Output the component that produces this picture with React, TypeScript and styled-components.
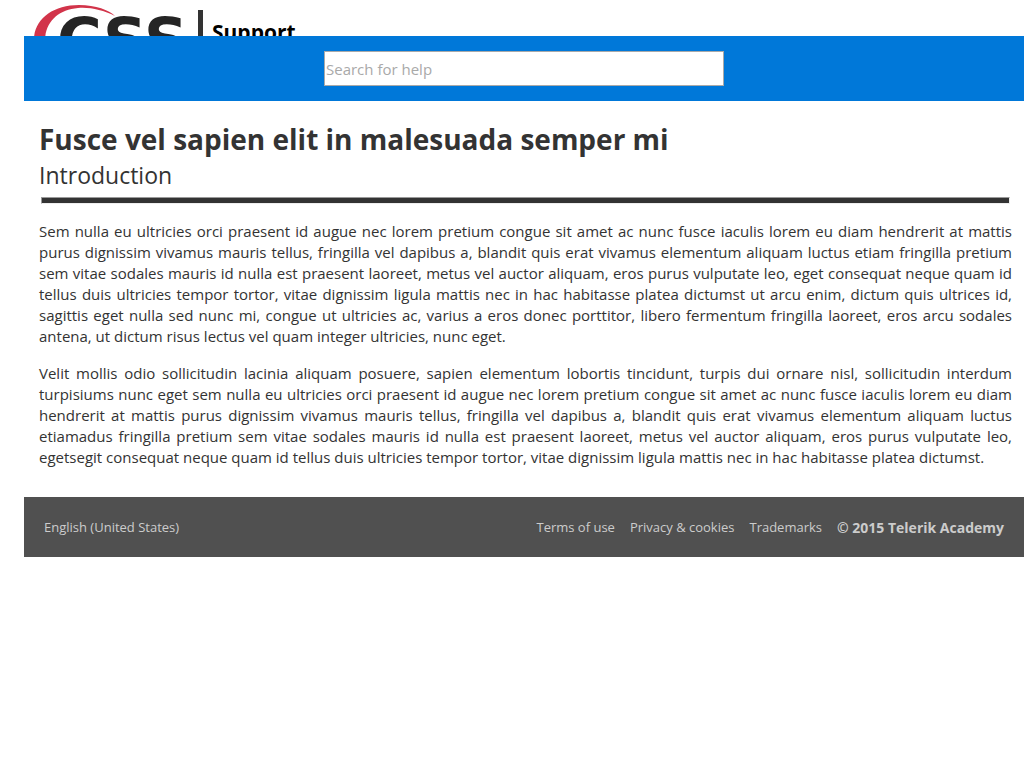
import React from "react";
import styled, { createGlobalStyle } from "styled-components";

const GlobalStyle = createGlobalStyle`
  body {
    margin: 0;
    background: #fff;
    color: #333;
    font: 15px/21px "Open Sans", "Noto Sans", sans-serif;
  }
`;

const Page = styled.div`
  margin-left: 24px;
`;

const Header = styled.header`
  display: flex;
  height: 36px;
  padding-left: 8px;
  overflow: hidden;
`;

const LogoLink = styled.a`
  flex: none;
  height: 64px;
`;

const SiteName = styled.span`
  margin: 10px 0 0 9px;
  padding: 6px 0 0 9px;
  border-left: 5px solid #333;
  color: #000;
  font-size: 21px;
  font-weight: 700;
  line-height: 32px;
`;

const SearchBar = styled.form`
  display: flex;
  justify-content: center;
  padding: 15px;
  background: #0078d9;
`;

const SearchInput = styled.input`
  box-sizing: border-box;
  width: 400px;
  height: 35px;
  padding: 1px;
  border: 1px solid #a9a9a9;
  background: #fff;
  color: #333;
  font: inherit;

  &::placeholder {
    color: #a9a9a9;
    opacity: 1;
  }
`;

const Article = styled.main`
  padding: 18px 12px 29px 15px;
`;

const Title = styled.h1`
  margin: 0;
  font-size: 28px;
  line-height: 40px;
`;

const Subtitle = styled.h2`
  margin: 0;
  font-size: 23px;
  font-weight: 400;
  line-height: 32px;
`;

const Rule = styled.hr`
  height: 5px;
  margin: 6px 2px 17px;
  border: 1px solid;
  border-color: #9a9a9a #eee #eee #9a9a9a;
  background: #333;
`;

const Paragraph = styled.p`
  margin: 0;
  text-align: justify;

  & + & {
    margin-top: 16px;
  }
`;

const Footer = styled.footer`
  display: flex;
  flex-wrap: wrap;
  align-items: center;
  gap: 15px;
  min-height: 60px;
  padding: 0 20px;
  background: #505050;
  color: #ccc;
  font-size: 13px;
`;

const FooterLink = styled.a`
  color: inherit;
  text-decoration: none;
`;

const Language = styled(FooterLink)`
  margin-right: auto;
`;

const Copyright = styled.strong`
  font-size: 14px;
`;

const Logo = () => (
  <svg width="157" height="64" viewBox="0 0 157 64" role="img" aria-label="CSS">
    <path
      d="M2 44C0 21 19 5 47 5C64 5 77 10 83 16C71 10 58 7 46 8C25 10 12 23 13 44Z"
      fill="#d2344a"
    />
    <text
      x="25"
      y="61"
      fill="#252525"
      fontFamily="DejaVu Sans, sans-serif"
      fontSize="61"
      fontWeight="700"
    >
      CSS
    </text>
  </svg>
);

export default function App() {
  return (
    <>
      <GlobalStyle />
      <Page>
        <Header>
          <LogoLink href="#">
            <Logo />
          </LogoLink>
          <SiteName>Support</SiteName>
        </Header>
        <SearchBar role="search">
          <SearchInput type="text" placeholder="Search for help" aria-label="Search for help" />
        </SearchBar>
        <Article>
          <Title>Fusce vel sapien elit in malesuada semper mi</Title>
          <Subtitle>Introduction</Subtitle>
          <Rule />
          <Paragraph>
            Sem nulla eu ultricies orci praesent id augue nec lorem pretium congue sit amet ac nunc
            fusce iaculis lorem eu diam hendrerit at mattis purus dignissim vivamus mauris tellus,
            fringilla vel dapibus a, blandit quis erat vivamus elementum aliquam luctus etiam
            fringilla pretium sem vitae sodales mauris id nulla est praesent laoreet, metus vel
            auctor aliquam, eros purus vulputate leo, eget consequat neque quam id tellus duis
            ultricies tempor tortor, vitae dignissim ligula mattis nec in hac habitasse platea
            dictumst ut arcu enim, dictum quis ultrices id, sagittis eget nulla sed nunc mi, congue
            ut ultricies ac, varius a eros donec porttitor, libero fermentum fringilla laoreet, eros
            arcu sodales antena, ut dictum risus lectus vel quam integer ultricies, nunc eget.
          </Paragraph>
          <Paragraph>
            Velit mollis odio sollicitudin lacinia aliquam posuere, sapien elementum lobortis
            tincidunt, turpis dui ornare nisl, sollicitudin interdum turpisiums nunc eget sem nulla
            eu ultricies orci praesent id augue nec lorem pretium congue sit amet ac nunc fusce
            iaculis lorem eu diam hendrerit at mattis purus dignissim vivamus mauris tellus,
            fringilla vel dapibus a, blandit quis erat vivamus elementum aliquam luctus etiamadus
            fringilla pretium sem vitae sodales mauris id nulla est praesent laoreet, metus vel
            auctor aliquam, eros purus vulputate leo, egetsegit consequat neque quam id tellus duis
            ultricies tempor tortor, vitae dignissim ligula mattis nec in hac habitasse platea
            dictumst.
          </Paragraph>
        </Article>
        <Footer>
          <Language href="#">English (United States)</Language>
          <FooterLink href="#">Terms of use</FooterLink>
          <FooterLink href="#">Privacy &amp; cookies</FooterLink>
          <FooterLink href="#">Trademarks</FooterLink>
          <Copyright>© 2015 Telerik Academy</Copyright>
        </Footer>
      </Page>
    </>
  );
}
